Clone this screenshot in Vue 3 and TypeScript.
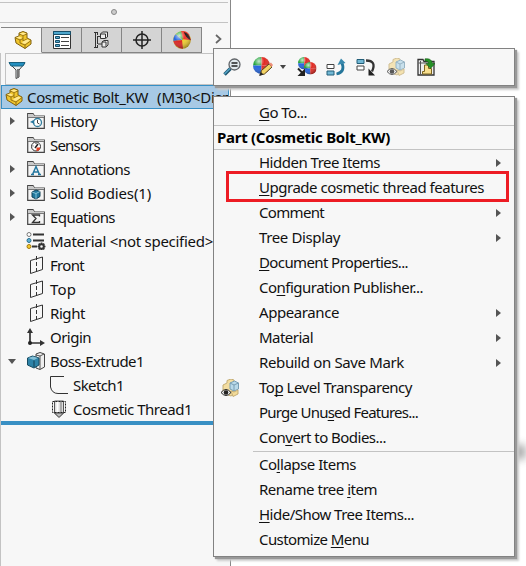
<script setup lang="ts">
interface TreeRow { label: string; icon: string; width: number; arrow?: 'closed' | 'open'; child?: boolean }
interface MenuRow { label: string; width: number; key?: number; submenu?: boolean; icon?: string; marked?: boolean }

const tabs = ['part', 'props', 'config', 'target', 'ball']

const tree: TreeRow[] = [
  { label: 'History', icon: 'f-history', width: 47, arrow: 'closed' },
  { label: 'Sensors', icon: 'f-sensor', width: 50 },
  { label: 'Annotations', icon: 'f-note', width: 80, arrow: 'closed' },
  { label: 'Solid Bodies(1)', icon: 'f-solid', width: 101, arrow: 'closed' },
  { label: 'Equations', icon: 'f-sum', width: 65, arrow: 'closed' },
  { label: 'Material <not specified>', icon: 'material', width: 163 },
  { label: 'Front', icon: 'plane', width: 34 },
  { label: 'Top', icon: 'plane', width: 26 },
  { label: 'Right', icon: 'plane', width: 35 },
  { label: 'Origin', icon: 'origin', width: 41 },
  { label: 'Boss-Extrude1', icon: 'extrude', width: 94, arrow: 'open' },
  { label: 'Sketch1', icon: 'sketch', width: 51, child: true },
  { label: 'Cosmetic Thread1', icon: 'thread', width: 119, child: true },
]

const partItems: MenuRow[] = [
  { label: 'Hidden Tree Items', width: 121, submenu: true },
  { label: 'Upgrade cosmetic thread features', width: 225, key: 0, marked: true },
  { label: 'Comment', width: 65, submenu: true },
  { label: 'Tree Display', width: 81, submenu: true },
  { label: 'Document Properties...', width: 149, key: 0 },
  { label: 'Configuration Publisher...', width: 164, key: 2 },
  { label: 'Appearance', width: 80, submenu: true },
  { label: 'Material', width: 54, submenu: true },
  { label: 'Rebuild on Save Mark', width: 145, submenu: true },
  { label: 'Top Level Transparency', width: 153, key: 2, icon: 'clear' },
  { label: 'Purge Unused Features...', width: 159, key: 9 },
  { label: 'Convert to Bodies...', width: 127, key: 3 },
]

const itemActions: MenuRow[] = [
  { label: 'Collapse Items', width: 97, key: 2 },
  { label: 'Rename tree item', width: 118, key: 12 },
  { label: 'Hide/Show Tree Items...', width: 155, key: 0 },
  { label: 'Customize Menu', width: 110, key: 10 },
]

const goTo: MenuRow = { label: 'Go To...', width: 48, key: 0 }
const groups: MenuRow[][] = [[goTo], partItems, itemActions]

// Tightens the tracking of a label so that it takes its designed width.
const vFit = {
  mounted(el: HTMLElement, binding: { value: number }) {
    const natural = el.getBoundingClientRect().width
    const count = (el.textContent ?? '').length
    el.style.letterSpacing = `${(binding.value - natural) / count}px`
  },
}

const before = (r: MenuRow) => (r.key === undefined ? r.label : r.label.slice(0, r.key))
const hot = (r: MenuRow) => (r.key === undefined ? '' : r.label[r.key])
const after = (r: MenuRow) => (r.key === undefined ? '' : r.label.slice(r.key + 1))
</script>

<template>
  <svg class="defs" aria-hidden="true">
    <defs>
      <symbol id="part" viewBox="0 0 18 18">
        <path d="M1 6.500 5 5V2l4-1.500L13 2v5l4 2v4l-6 4.500L2 12z" fill="#f1c62c" stroke="#80600f" />
        <path d="m5 3 4 1.500L13 3M1.500 7 6 9l3-1.500V5M6 9v3l5 2 5.500-4M9 7.500V10l4-2M11 14v3.500" fill="none" stroke="#80600f" stroke-width=".8" />
        <path d="m5.500 2.500 3.500-1 3.500 1L9 4zM2 6.500l3-1 3.500 1.500L6 8zM9 10.500l4-2 3 1-5 3.500-3-1z" fill="#ffe991" />
      </symbol>
      <symbol id="props" viewBox="0 0 18 18">
        <path d="M.5.5h17v17H.5z" fill="#fff" stroke="#333" />
        <path d="M.5.5h17v3H.5z" fill="#4da6cc" stroke="#174f6b" />
        <path d="M2.500 5.500h4v2h-4zM2.500 9.500h4v2h-4zM2.500 13.500h4v2h-4z" fill="#57a7cb" stroke="#174f6b" />
        <path d="M8 6.500h8M8 10.500h8M8 14.500h8" stroke="#444" />
      </symbol>
      <symbol id="config" viewBox="0 0 18 18">
        <path d="M2.500 1v16M1 1.500h4M1 16.500h4M4.500 1v3M4.500 14v3M5 5.500h3M5 13h4M4.500 5v8" fill="none" stroke="#333" />
        <path d="M7.500 3 9.500 1h5v5l-2 1.500h-5zM9 11l2-1.500h4V14l-2 2H9z" fill="#eee" stroke="#333" />
        <path d="M7.500 3h5v4M9 11h4v4.500" fill="none" stroke="#333" />
      </symbol>
      <symbol id="target" viewBox="0 0 18 18">
        <circle cx="9" cy="9" r="6" fill="none" stroke="#222" stroke-width="1.500" />
        <path d="M9 0v18M0 9h18" stroke="#222" stroke-width="1.500" />
      </symbol>
      <radialGradient id="shine" cx=".35" cy=".25" r=".8">
        <stop offset="0" stop-color="#fff" stop-opacity=".75" />
        <stop offset=".4" stop-color="#fff" stop-opacity="0" />
        <stop offset="1" stop-color="#000" stop-opacity=".4" />
      </radialGradient>
      <symbol id="sphere" viewBox="0 0 18 18">
        <path d="M9 9H0a9 9 0 0 1 9-9z" fill="#20a339" />
        <path d="M9 9V0a9 9 0 0 1 9 9z" fill="#e22a22" />
        <path d="M9 9H0a9 9 0 0 0 9 9z" fill="#2465df" />
        <path d="M9 9h9a9 9 0 0 1-9 9z" fill="#e32a22" />
        <circle cx="9" cy="9" r="9" fill="url(#shine)" />
      </symbol>
      <symbol id="ball" viewBox="0 0 18 18">
        <circle cx="9" cy="9" r="8.800" fill="#f0cf30" />
        <path d="M9 9 .3 10A8.800 8.800 0 0 1 3 3z" fill="#2465df" />
        <path d="M3 3A8.800 8.800 0 0 1 9 .2L10 9z" fill="#28a83a" />
        <path d="M8 .3q5-1 8 3l2 6-8-1z" fill="#ed382c" />
        <path d="m.3 10 8.700-1 1 8.800Q2 17 .3 10z" fill="#da2523" />
        <path d="M11 1q5 1 6.500 8Q12 6 11 1z" fill="#231a1a" />
        <circle cx="9" cy="9" r="8.800" fill="url(#shine)" />
      </symbol>
      <symbol id="filter" viewBox="0 0 18 18">
        <path d="M1 2h16l-6 7v7l-3 1.500V9z" fill="#e8eef0" stroke="#444" />
        <path d="M1 1.500h16L15 5H3z" fill="#238fc0" stroke="#19617f" />
        <path d="M10 8v8" stroke="#777" stroke-width="2" />
      </symbol>
      <symbol id="folder" viewBox="0 0 18 18">
        <path d="M.7 16.300V1.700H6L7.500 4h9.800v12.300z" fill="#f4f4f4" stroke="#454545" stroke-width="1.200" />
        <path d="M1 2h5l1.500 2H17v2H1z" fill="#c9c9c9" />
        <path d="M1 5.500h16" stroke="#777" />
      </symbol>
      <symbol id="f-history" viewBox="0 0 18 18">
        <use href="#folder" /><circle cx="10.500" cy="10.500" r="4" fill="#fff" stroke="#337d9c" stroke-width="1.300" />
        <path d="M10.500 8v3l2 1" fill="none" stroke="#444" /><path d="m3 10 3.500-2 1 4z" fill="#2878a0" />
      </symbol>
      <symbol id="f-sensor" viewBox="0 0 18 18">
        <use href="#folder" /><circle cx="9" cy="10.500" r="4.500" fill="#fff" stroke="#333" />
        <path d="m8 12 3-4" stroke="#222" stroke-width="1.500" /><path d="M9.500 11.500H13v1.500l-2 2H9.500z" fill="#e23f22" />
        <path d="M5.500 10h1M9 7v1" stroke="#333" />
      </symbol>
      <symbol id="f-note" viewBox="0 0 18 18">
        <use href="#folder" /><path d="m5.500 14.500 3.500-8 3.500 8M6.500 12h5M4 14.500h3M11 14.500h3" fill="none" stroke="#24779f" stroke-width="1.500" />
      </symbol>
      <symbol id="f-solid" viewBox="0 0 18 18">
        <use href="#folder" /><path d="m5 8 4-2 4 1.500v5L9 15l-4-2z" fill="#1f789e" stroke="#124259" />
        <path d="m5 8 4 1.500 4-2M9 9.500V15" fill="none" stroke="#9ed3e5" stroke-width=".8" />
      </symbol>
      <symbol id="f-sum" viewBox="0 0 18 18">
        <use href="#folder" /><path d="M12.500 8.500V7h-7L9 10.500 5.500 14.500h7V13" fill="none" stroke="#333" stroke-width="1.300" />
      </symbol>
      <symbol id="material" viewBox="0 0 20 18">
        <path d="M7 2.500h11M7 8.500h11M6 14.500h5" stroke="#333" stroke-width="2" />
        <circle cx="3" cy="2.500" r="2" fill="#fff" stroke="#777" /><circle cx="3" cy="8.500" r="2" fill="#61b2d5" stroke="#266f91" />
        <circle cx="3" cy="14.500" r="2" fill="#f5c92f" stroke="#a47b0c" />
        <circle cx="15.500" cy="14.500" r="2.300" fill="none" stroke="#333" stroke-width="2" />
        <path d="M15.500 10.500v2M15.500 16.500v2M11.500 14.500h2M17.500 14.500h2M12.700 11.700l1 1M17.300 16.300l1 1M18.300 11.700l-1 1M12.700 17.300l1-1" stroke="#333" stroke-width="1.700" />
      </symbol>
      <symbol id="plane" viewBox="0 0 18 18">
        <path d="M3.500 4.500 15.500 1v12.500l-12 4z" fill="none" stroke="#333" />
        <path d="M9.500 0v18" stroke="#333" stroke-dasharray="4 2" />
      </symbol>
      <symbol id="origin" viewBox="0 0 18 18">
        <path d="M3 3v12h12" fill="none" stroke="#333" stroke-width="1.700" />
        <path d="m0 5 3-5 3 5zM13 12l5 3-5 3z" fill="#333" /><circle cx="3" cy="15" r="2" fill="#222" />
      </symbol>
      <symbol id="extrude" viewBox="0 0 18 18">
        <path d="m9 2 4-1.500 4.500 1.500v13L13 17.500 9 16z" fill="#eee" stroke="#444" />
        <path d="M13 4v13M9 3l4 1 4-2" fill="none" stroke="#555" />
        <path d="m.5 6 5-2L12 6v7l-5 3-6.500-3z" fill="#2d83a8" stroke="#174b61" />
        <path d="m1 6 5-1.500L11 6 7 8z" fill="#83bfd6" /><path d="M7 8.500V15" stroke="#123e53" />
      </symbol>
      <symbol id="sketch" viewBox="0 0 18 18"><path d="M14 .5H.5V11Q2 17.500 8 17.500h10" fill="none" stroke="#333" /></symbol>
      <symbol id="thread" viewBox="0 0 18 18">
        <path d="M4.500 1h9v12l-4.500 4-4.500-4z" fill="#ddd" stroke="#555" /><path d="M6.500 1.500h2V13h-2z" fill="#fff" />
        <path d="M11 2v10" stroke="#aaa" stroke-width="2" /><path d="M4.500 13h9L9 17.500z" fill="#bbb" stroke="#444" />
        <path d="M2.500 1.500h13v11h-13z" fill="none" stroke="#222" stroke-dasharray="2 1" />
      </symbol>
      <symbol id="magnifier" viewBox="0 0 18 18">
        <path d="m1.500 16.500 6-6" stroke="#1f5670" stroke-width="3.500" /><path d="m1.500 16 6-6" stroke="#55a5c8" stroke-width="1.500" />
        <circle cx="11.500" cy="6.500" r="5.500" fill="#dfe8ec" stroke="#606468" stroke-width="1.300" />
        <path d="M8.500 5h6M8.500 8h6" stroke="#222" stroke-width="1.500" />
      </symbol>
      <symbol id="paint" viewBox="0 0 20 20">
        <use href="#sphere" width="17" height="17" />
        <path d="m7 18 1.500-4.500L16 7l3 3-7.500 7z" fill="#f3d465" stroke="#56431f" /><path d="m16 7 2-1.500 2 2.500-1.500 2z" fill="#ed8e78" />
        <path d="m6 19 2-4 2.500 2.500z" fill="#272727" />
      </symbol>
      <symbol id="copyball" viewBox="0 0 20 20">
        <use href="#sphere" x="1" y="0" width="12.500" height="12.500" /><use href="#sphere" x="7" y="5" width="12.500" height="12.500" />
        <path d="m1 11.500 5 5" fill="none" stroke="#222" stroke-width="2" /><path d="M8 11.500V19H.5z" fill="#222" />
      </symbol>
      <symbol id="rollback" viewBox="0 0 20 18">
        <path d="M1 6.500h7v4H1z" fill="#fff" stroke="#444" /><path d="M1 13h7v4H1z" fill="#72b8d5" stroke="#235e78" />
        <path d="M10.500 16q9-2 5.500-11" fill="none" stroke="#25769a" stroke-width="2.800" /><path d="m11.500 7 3.500-6.500L19.500 5z" fill="#3989ad" />
      </symbol>
      <symbol id="rollforward" viewBox="0 0 20 18">
        <path d="M1 1.500h7v4H1z" fill="#72b8d5" stroke="#235e78" /><path d="M1 8h7v4H1z" fill="#fff" stroke="#444" />
        <path d="M10 2.500q11 0 6 11" fill="none" stroke="#333" stroke-width="2.300" /><path d="M12.500 10.500v7H19z" fill="#222" />
      </symbol>
      <symbol id="clear" viewBox="0 0 18 18">
        <path d="m2 6 4-2V1.500L10 0l3 1v14l-3 2-8-3z" fill="#f3dda0" stroke="#c4ad75" />
        <path d="m9 4 4.500-2L17.500 4v6L13 12 9 10z" fill="#b9d9e9" stroke="#789eb4" /><path d="m9 4 4 2 4.500-2M13 6v6" fill="none" stroke="#789eb4" />
        <path d="m10 12 3 1 4-2v4l-5 2.500z" fill="#f3db98" stroke="#c4ad75" />
        <path d="M0 13.500q5-6 10 0-5 6-10 0z" fill="#eee" stroke="#222" /><circle cx="5" cy="13.500" r="2.300" fill="#222" />
      </symbol>
      <symbol id="export" viewBox="0 0 18 18">
        <path d="M1 17V1.500h5l1 2h10V17z" fill="#eee" stroke="#333" stroke-width="1.300" /><path d="M3.500 3v13.500M1.500 5h14" stroke="#555" />
        <path d="M7.500 7h4v3.500h3v5.500h-9v-2.500h2z" fill="#f8df8e" stroke="#7d641c" />
        <path d="M8 .8q6.500-1 7.500 4.700H18L13.500 10.500 9 5.500h3Q11 2.500 8 3z" fill="#259226" stroke="#176017" stroke-width=".6" />
      </symbol>
    </defs>
  </svg>

  <main class="screen">
    <section class="panel">
      <div class="grip"><i></i></div>
      <nav class="tabs">
        <button v-for="(t, i) in tabs" :key="t" :class="{ current: i === 0 }"><svg class="icon"><use :href="'#' + t" /></svg></button>
        <svg class="more" viewBox="0 0 8 10"><path d="m1 1 4.500 4L1 9" /></svg>
      </nav>
      <div class="body">
        <div class="filter"><svg class="icon"><use href="#filter" /></svg></div>
        <div class="root"><svg class="icon"><use href="#part" /></svg><span v-fit="121">Cosmetic Bolt_KW</span><span v-fit="74">(M30&lt;Disp</span></div>
        <div v-for="r in tree" :key="r.label" class="row" :class="{ child: r.child }">
          <span class="twist" :class="r.arrow"></span>
          <svg class="icon" :class="r.icon"><use :href="'#' + r.icon" /></svg>
          <span v-fit="r.width">{{ r.label }}</span>
        </div>
        <div class="rollbar"></div>
      </div>
    </section>
    <div class="smudge"></div>

    <div class="popup toolbar">
      <svg class="icon"><use href="#magnifier" /></svg>
      <svg class="icon big paint"><use href="#paint" /></svg>
      <i class="drop"></i>
      <svg class="icon big copyball"><use href="#copyball" /></svg>
      <svg class="icon big rollback"><use href="#rollback" /></svg>
      <svg class="icon big rollforward"><use href="#rollforward" /></svg>
      <svg class="icon faded"><use href="#clear" /></svg>
      <svg class="icon export"><use href="#export" /></svg>
    </div>

    <div class="popup menu">
      <template v-for="(g, gi) in groups" :key="gi">
        <h2 v-if="gi === 1"><span v-fit="173">Part (Cosmetic Bolt_KW)</span></h2>
        <hr v-if="gi === 2" />
        <div v-for="r in g" :key="r.label" class="item" :class="{ marked: r.marked }">
          <span class="gutter"><svg v-if="r.icon" class="icon"><use :href="'#' + r.icon" /></svg></span>
          <span v-fit="r.width" class="label">{{ before(r) }}<u v-if="hot(r)">{{ hot(r) }}</u>{{ after(r) }}</span>
          <i v-if="r.submenu" class="sub"></i>
        </div>
      </template>
    </div>
  </main>
</template>

<style>
body { background: #fff; overflow: hidden; }
</style>

<style scoped>
.defs { position: absolute; width: 0; height: 0; }
.screen { position: relative; width: 526px; height: 566px; overflow: hidden; font: 15px/24px "Noto Sans", "Open Sans", sans-serif; color: #111; white-space: pre; }
.panel { box-sizing: border-box; display: flex; flex-direction: column; width: 231px; height: 566px; background: #f7f7f7; border-right: 1px solid #888; }
.icon { width: 18px; height: 18px; flex: none; overflow: visible; }
.grip { box-sizing: border-box; flex: none; width: 228px; height: 23px; padding-top: 2px; border-bottom: 1px solid #c3c3c3; display: flex; justify-content: center; align-items: center; background: linear-gradient(#c3c3c3, #c3c3c3) 0 2px / 228px 1px no-repeat; }
.grip i { width: 4px; height: 4px; border: 1px solid #888; border-radius: 50%; background: #ccc; margin-top: -1px; }
.tabs { display: flex; flex: none; height: 26px; margin: 4px 0 0 1px; align-items: stretch; }
.tabs button { box-sizing: border-box; width: 40px; padding: 0 0 1px; border: solid #858585; border-width: 1px 1px 1px 0; background: #d4d4d4; display: flex; align-items: center; justify-content: center; }
.tabs button.current { width: 41px; padding-left: 3px; background: #f7f7f7; border-bottom-color: transparent; }
.more { width: 8px; height: 12px; margin: 6px 0 0 13px; fill: none; stroke: #666; stroke-width: 1.7; }
.body { flex: 1; border-left: 1px solid #c3c3c3; }
.filter { box-sizing: border-box; height: 32px; width: 225px; margin-left: 4px; padding: 7px 0 0 2px; border: 1px solid #c3c3c3; border-right: 0; }
.root { box-sizing: border-box; width: 228px; height: 24px; border: 1px solid #368fc5; background: #a7c9e5; display: flex; align-items: center; padding-left: 3px; overflow: hidden; }
.root span { flex: none; margin-left: 4px; }
.root span + span { margin-left: 9px; }
.row { height: 24px; display: flex; align-items: center; padding-left: 9px; }
.row > span:last-child { flex: none; margin-left: 5px; }
.row.child { padding-left: 32px; }
.twist { width: 17px; display: flex; }
.twist.closed::before { content: ""; border: solid transparent; border-width: 4px 0 4px 5px; border-left-color: #555; margin-top: -1px; }
.twist.open::before { content: ""; border: solid transparent; border-width: 5px 4px 0; border-top-color: #555; margin-left: -2px; }
.material { width: 20px; margin: 0 -1px; }
.rollbar { height: 4px; width: 228px; background: #3990c4; }
.smudge { position: absolute; left: 508px; top: 445px; width: 18px; height: 14px; background: #aaa; filter: blur(4px); }
.popup { position: absolute; box-sizing: border-box; left: 213px; width: 302px; background: #f7f7f7; border: 1px solid #828282; }
.popup { box-shadow: 2px 2px 1px #999, 4px 4px 2px #ccc; }
.toolbar { top: 48px; height: 38px; display: flex; align-items: center; padding-left: 9px; }
.icon.big { width: 20px; height: 20px; }
.paint { margin-left: 12px; }
.drop { border: solid transparent; border-width: 4px 3px 0; border-top-color: #444; margin-left: 7px; }
.copyball { margin-left: 11px; }
.rollback { margin-left: 9px; }
.rollforward { margin-left: 10px; }
.faded { margin-left: 11px; opacity: .75; }
.export { margin-left: 12px; }
.menu { top: 96px; height: 461px; padding-top: 3px; }
h2 { box-sizing: border-box; height: 25px; margin: 0; border: solid #c3c3c3; border-width: 1px 0; font-size: 15px; line-height: 23px; padding-left: 3px; color: #000; }
hr { box-sizing: content-box; height: 1px; border: 0; margin: 1px 0 0 39px; background: #c3c3c3; }
.item { position: relative; height: 25px; display: flex; align-items: center; }
.label { padding-bottom: 1px; }
.gutter { width: 38px; padding-left: 7px; display: flex; flex: none; }
.sub { margin: 0 13px 0 auto; border: solid transparent; border-width: 4px 0 4px 5px; border-left-color: #555; }
u { text-decoration: underline; text-underline-offset: 2px; text-decoration-thickness: 1px; text-decoration-skip-ink: none; }
.marked::after { content: ""; position: absolute; left: 12px; top: -4px; width: 277px; height: 25px; border: 3px solid #ed1c24; }
</style>
